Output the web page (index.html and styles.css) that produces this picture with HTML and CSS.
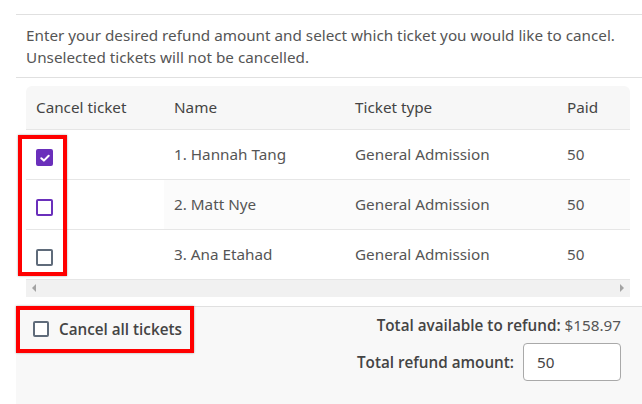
FILE: index.html
```html
<!DOCTYPE html>
<html>
<head>
<meta charset="utf-8">
<link rel="stylesheet" href="styles.css">
</head>
<body>
<div class="panel">
  <p class="intro">Enter your desired refund amount and select which ticket you would like to cancel. Unselected tickets will not be cancelled.</p>
  <div class="table-wrap">
    <table class="tickets">
      <thead>
        <tr>
          <th class="c1">Cancel ticket</th>
          <th class="c2">Name</th>
          <th class="c3">Ticket type</th>
          <th class="c4">Paid</th>
        </tr>
      </thead>
      <tbody>
        <tr>
          <td class="c1"><span class="cb checked"><svg viewBox="0 0 16 16" width="16" height="16"><path d="M4.3 8.2 L6.9 10.6 L11.7 5.8" fill="none" stroke="#fff" stroke-width="2" stroke-linecap="round" stroke-linejoin="round"/></svg></span></td>
          <td>1. Hannah Tang</td>
          <td>General Admission</td>
          <td>50</td>
        </tr>
        <tr class="alt">
          <td class="c1"><span class="cb focus"></span></td>
          <td>2. Matt Nye</td>
          <td>General Admission</td>
          <td>50</td>
        </tr>
        <tr>
          <td class="c1"><span class="cb"></span></td>
          <td>3. Ana Etahad</td>
          <td>General Admission</td>
          <td>50</td>
        </tr>
      </tbody>
    </table>
    <div class="hscroll">
      <span class="arr left"></span>
      <span class="arr right"></span>
    </div>
    <div class="highlight col-highlight"></div>
  </div>
  <div class="footer">
    <label class="all"><span class="cb"></span><span>Cancel all tickets</span></label>
    <div class="totals">
      <div class="avail"><b>Total available to refund:</b> $158.97</div>
      <div class="amount"><b>Total refund amount:</b><span class="input">50</span></div>
    </div>
  </div>
</div>
</body>
</html>
```
FILE: styles.css
```css
* { box-sizing: border-box; }
html, body { margin: 0; padding: 0; background: #fff; }
body {
  font-family: "Noto Sans", "Open Sans", sans-serif;
  color: #555;
  font-size: 15.25px;
}
.panel {
  margin-top: 14px;
  margin-left: 16px;
  border-top: 1px solid #e0e0e0;
  height: 390px;
  display: flex;
  flex-direction: column;
}
.intro {
  margin: 0;
  padding: 9px 10px 9px 10px;
  line-height: 22px;
  border-bottom: 1px solid #e0e0e0;
}
.table-wrap {
  position: relative;
  margin: 8px 12px 0 10px;
}
.tickets {
  width: 100%;
  border-collapse: collapse;
  table-layout: fixed;
}
.tickets th {
  background: #f7f7f7;
  color: #444;
  font-weight: 400;
  text-align: left;
  height: 43px;
  padding: 0 10px;
  border-bottom: 1px solid #e6e6e6;
}
.tickets th.c1 { border-top-left-radius: 6px; }
.tickets th.c4 { border-top-right-radius: 6px; }
.c1 { width: 138px; }
.c2 { width: 181px; }
.c3 { width: 212px; }
.tickets td {
  height: 50px;
  padding: 0 10px;
  border-bottom: 1px solid #e6e6e6;
}
.tickets tr.alt td { background: #fbfbfb; }
.tickets tr.alt td.c1 { background: #fff; }
.tickets td.c1 { padding-top: 3px; }
.cb {
  display: inline-block;
  width: 17px;
  height: 17px;
  border: 2px solid #5f6b7a;
  border-radius: 2px;
  vertical-align: middle;
  background: #fff;
}
.cb.checked {
  background: #6a2fbb;
  border-color: #6a2fbb;
  position: relative;
}
.cb.checked svg { position: absolute; left: -1px; top: -1px; }
.cb.focus { border-color: #6a2fbb; }
.hscroll {
  height: 17px;
  background: #f1f1f1;
  display: flex;
  justify-content: space-between;
  align-items: center;
  padding: 0 6px;
}
.arr { width: 0; height: 0; border-top: 4px solid transparent; border-bottom: 4px solid transparent; }
.arr.left { border-right: 4px solid #a3a3a3; }
.arr.right { border-left: 4px solid #a3a3a3; }
.highlight {
  position: absolute;
  border: 4px solid #f00;
  box-shadow: 0 0 2px rgba(0,0,0,0.35);
}
.col-highlight {
  left: -8px;
  top: 49px;
  width: 49px;
  height: 141px;
}
.footer {
  margin-top: 9px;
  border-top: 1px solid #e0e0e0;
  background: #f8f8f8;
  flex: 1;
  display: flex;
  justify-content: space-between;
  align-items: flex-start;
  padding-right: 21px;
}
.all {
  margin-top: -1px;
  border: 4px solid #f00;
  box-shadow: 0 0 2px rgba(0,0,0,0.35);
  height: 47px;
  width: 178px;
  display: flex;
  align-items: center;
  gap: 10px;
  padding-left: 13px;
  font-family: "Open Sans", "Noto Sans", sans-serif;
  font-weight: 600;
  color: #444;
}
.all .cb { width: 16px; height: 16px; }
.totals {
  display: flex;
  flex-direction: column;
  align-items: flex-end;
  padding-top: 8px;
  color: #555;
}
.totals b {
  font-family: "Open Sans", "Noto Sans", sans-serif;
  font-weight: 600;
  color: #444;
}
.avail { line-height: 20px; }
.amount {
  margin-top: 8px;
  display: flex;
  align-items: center;
  gap: 9px;
}
.input {
  width: 98px;
  height: 38px;
  border: 1px solid #a9a9a9;
  border-radius: 4px;
  background: #fff;
  display: flex;
  align-items: center;
  padding-left: 13px;
  color: #444;
}
```
